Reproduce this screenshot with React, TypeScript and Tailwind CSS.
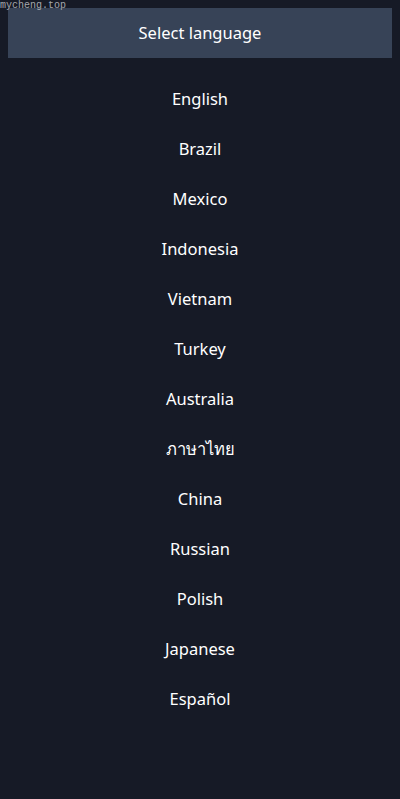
const languages = [
  'English',
  'Brazil',
  'Mexico',
  'Indonesia',
  'Vietnam',
  'Turkey',
  'Australia',
  'ภาษาไทย',
  'China',
  'Russian',
  'Polish',
  'Japanese',
  'Español',
];

export default function App() {
  return (
    <div className="relative min-h-[799px] bg-[#161a26] p-2 font-['Noto_Sans',sans-serif] text-white">
      {/* watermark */}
      <span className="absolute left-0 top-0 font-['Liberation_Mono',monospace] text-[10px] leading-[12px] text-[#a4a7ad]">
        mycheng.top
      </span>

      <div className="flex h-[50px] items-center justify-center bg-[#374357] text-[16.5px]">
        Select language
      </div>

      <ul className="mt-4">
        {languages.map((lang) => (
          <li key={lang} className="flex h-[50px] items-center justify-center text-[16.5px]">
            {lang}
          </li>
        ))}
      </ul>
    </div>
  );
}
